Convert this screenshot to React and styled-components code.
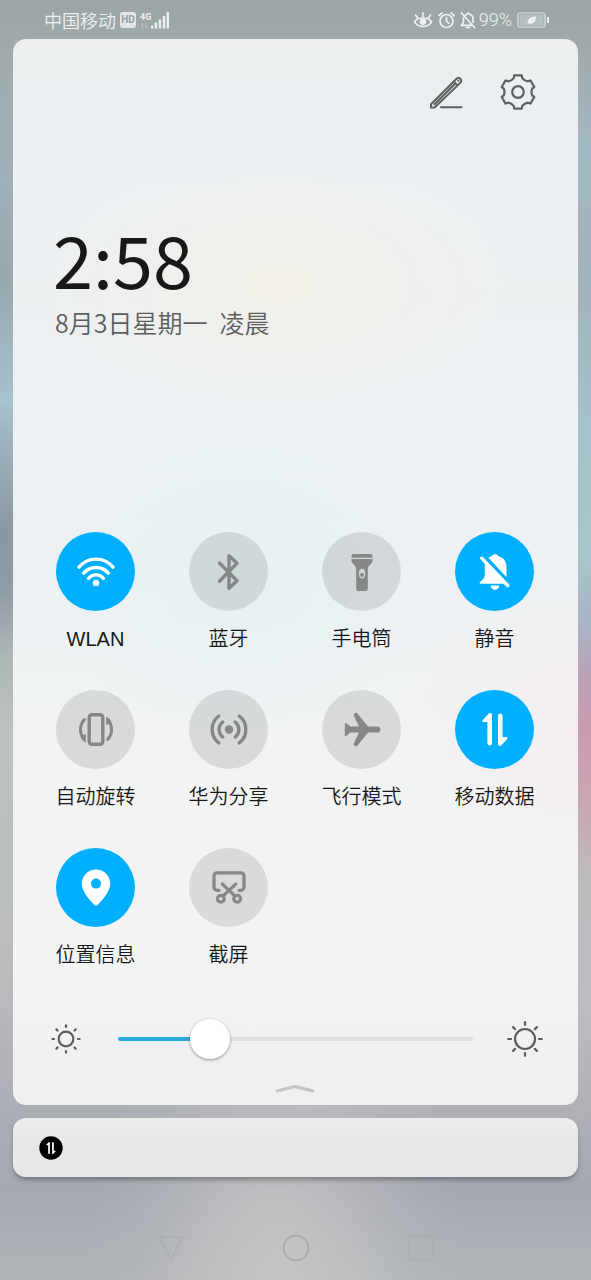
import React, { useState } from "react";
import styled, { createGlobalStyle } from "styled-components";

const GlobalStyle = createGlobalStyle`
  * {
    box-sizing: border-box;
  }
  body {
    margin: 0;
    font-family: "Liberation Sans", "Noto Sans CJK SC", sans-serif;
  }
  button {
    border: 0;
    padding: 0;
    background: none;
    color: inherit;
    font: inherit;
    cursor: pointer;
  }
  svg {
    display: block;
  }
`;

const Screen = styled.div`
  display: flex;
  flex-direction: column;
  min-height: 100vh;
  background:
    radial-gradient(ellipse 190px 340px at 47% 100%, #c4c4c4 0%, rgba(196, 196, 196, 0.6) 40%, rgba(196, 196, 196, 0.15) 75%, rgba(196, 196, 196, 0) 100%),
    linear-gradient(
        #9da5a6 0,
        #a1abad 60px,
        #a0b0b7 180px,
        #98a8ac 280px,
        #a5c2cf 400px,
        #9db0bb 450px,
        #8b97a1 530px,
        #909ba3 590px,
        #b0b8b8 660px,
        #bcc1c0 730px,
        #b9babd 1000px,
        #abaeb5 1110px,
        #a5a9b2 1190px,
        #b1b4b8 1280px
      )
      left / 50% 100% no-repeat,
    linear-gradient(
        #9da5a6 0,
        #a1abad 60px,
        #a3b8c2 150px,
        #a1b2b8 280px,
        #a6bfc9 400px,
        #a9c4c9 560px,
        #a9b5c4 620px,
        #b8a3b6 670px,
        #cb9baf 735px,
        #c8a6b4 800px,
        #bdb9bd 870px,
        #bdbdc1 1000px,
        #b0b1b7 1110px,
        #a5a8b2 1190px,
        #b1b6b9 1280px
      )
      right / 50% 100% no-repeat,
    #a5a9b2;
`;

const StatusBar = styled.header`
  display: flex;
  align-items: center;
  justify-content: space-between;
  height: 39px;
  padding: 0 42px 0 44px;
  color: #edf1f2;
`;

const StatusGroup = styled.div`
  display: flex;
  align-items: center;
  gap: ${(p) => p.$gap}px;
`;

const Carrier = styled.span`
  font-family: "Noto Sans CJK SC", sans-serif;
  font-size: 18px;
  line-height: 24px;
  font-weight: 350;
`;

const HdBadge = styled.span`
  width: 16px;
  border-radius: 3px;
  background: #e3e7e8;
  color: #929b9d;
  font-family: Roboto, sans-serif;
  font-size: 10px;
  line-height: 16px;
  font-weight: bold;
  text-align: center;
`;

const Network = styled.div`
  display: flex;
  align-items: flex-end;
`;

const NetworkType = styled.div`
  display: flex;
  flex-direction: column;
  align-items: flex-start;
  font-family: Roboto, sans-serif;
  font-size: 9px;
  line-height: 10px;
  font-weight: bold;
`;

const Percent = styled.span`
  font-family: Roboto, sans-serif;
  font-size: 18px;
  line-height: 24px;
  font-weight: 300;
`;

const Panel = styled.main`
  margin: 0 13px;
  padding: 35px 17px 11px 16px;
  border-radius: 13px;
  background:
    radial-gradient(ellipse 230px 130px at 47% 23%, #f2f0e8 0%, rgba(242, 240, 232, 0) 100%),
    radial-gradient(ellipse 200px 150px at 40% 51%, #e6f1f3 0%, rgba(230, 241, 243, 0) 100%),
    radial-gradient(ellipse 180px 150px at 100% 65%, #f5edf0 0%, rgba(245, 237, 240, 0) 100%),
    linear-gradient(#ebedee 0%, #ecf0f3 12%, #edf0f1 24%, #ebf1f4 38%, #edf1f3 50%, #f2f3f3 70%, #f2f3f3 88%, #efeff0 100%);
`;

const Toolbar = styled.div`
  display: flex;
  justify-content: flex-end;
  gap: 36px;
  padding-right: 25px;
  color: #5e6061;
`;

const Clock = styled.div`
  margin-top: 112px;
  padding-left: 24px;
  color: #171817;
  font-family: "Noto Sans CJK SC", sans-serif;
  font-size: 72px;
  line-height: 72px;
  font-weight: 400;
`;

const DateLine = styled.div`
  display: flex;
  gap: 12px;
  margin-top: 10px;
  padding-left: 26px;
  color: #5d5e5d;
  font-family: "Noto Sans CJK SC", sans-serif;
  font-size: 25px;
  line-height: 36px;
  font-weight: 350;
`;

const TileGrid = styled.div`
  display: grid;
  grid-template-columns: repeat(4, 1fr);
  row-gap: 37px;
  margin-top: 192px;
`;

const Tile = styled.button`
  display: flex;
  flex-direction: column;
  align-items: center;
  gap: 14px;
`;

const TileCircle = styled.span`
  display: grid;
  place-items: center;
  width: 79px;
  height: 79px;
  border-radius: 50%;
  background: ${(p) => (p.$on ? "#00b0ff" : "rgba(0, 0, 0, 0.1)")};
  color: ${(p) => (p.$on ? "#fff" : "#868888")};
`;

const TileLabel = styled.span`
  color: #161717;
  font-size: 20px;
  line-height: 28px;
  font-weight: 350;
  white-space: nowrap;
`;

const Brightness = styled.div`
  display: flex;
  align-items: center;
  margin-top: 50px;
  padding: 0 18px 0 22px;
  color: #5b5c5c;
`;

const Slider = styled.input`
  appearance: none;
  flex: 1;
  min-width: 0;
  height: 40px;
  margin: 0 34px 0 37px;
  background: none;

  &::-webkit-slider-runnable-track {
    height: 4px;
    border-radius: 2px;
    background: linear-gradient(to right, #27a9de var(--fill), #dedfdf var(--fill));
  }
  &::-webkit-slider-thumb {
    appearance: none;
    width: 40px;
    height: 40px;
    margin-top: -18px;
    border-radius: 50%;
    background: #fff;
    box-shadow: 0 1px 3px rgba(0, 0, 0, 0.4);
  }
`;

const Collapse = styled.button`
  display: block;
  margin: 25px auto 0;
  color: #c3c4c4;
`;

const Notification = styled.section`
  display: flex;
  align-items: center;
  height: 59px;
  margin: 13px 13px 0;
  padding-left: 26px;
  border-radius: 13px;
  background: linear-gradient(#ededee, #e7e8e9 30%, #e6e7e7);
  box-shadow: 0 4px 6px -2px rgba(0, 0, 0, 0.4);
`;

const NavBar = styled.nav`
  display: flex;
  justify-content: center;
  gap: 97px;
  margin-top: 57px;
  padding-bottom: 18px;
`;

const NavButton = styled.button`
  color: ${(p) => (p.$strong ? "#abacad" : "rgba(160, 162, 164, 0.35)")};
`;

const Icon = ({ size = 40, width, height, children, ...rest }) => (
  <svg
    width={width || size}
    height={height || size}
    viewBox={`0 0 ${width || size} ${height || size}`}
    fill="none"
    stroke="currentColor"
    strokeWidth="3.4"
    strokeLinecap="round"
    strokeLinejoin="round"
    aria-hidden="true"
    {...rest}
  >
    {children}
  </svg>
);

const polar = (r, deg) => {
  const a = (deg * Math.PI) / 180;
  return `${(18 + r * Math.cos(a)).toFixed(2)} ${(18 + r * Math.sin(a)).toFixed(2)}`;
};

// six teeth, with a shallow curved valley between each pair
const gearPath =
  [0, 1, 2, 3, 4, 5]
    .map((i) => {
      const t = i * 60 - 90;
      return `${i ? "L" : "M"}${polar(17, t - 13)}L${polar(17, t + 13)}L${polar(14.6, t + 17)}Q${polar(12.8, t + 30)} ${polar(14.6, t + 43)}`;
    })
    .join("") + "Z";

const EditIcon = () => (
  <Icon size={36} strokeWidth="2">
    <path d="M3 33.5v-3.2L28.300 5c1.400-1.400 2.900-1.400 4.100-.2 1.200 1.200 1.200 2.700-.2 4.100L6.600 33.500Z" />
    <path d="M6.500 30.200 26.800 10M25.800 7.600l3.600 3.600" />
    <circle cx="30.300" cy="6.800" r="1" fill="currentColor" stroke="none" />
    <path d="M13 33.200h20.500" />
  </Icon>
);

const GearIcon = () => (
  <Icon size={36} strokeWidth="2.2">
    <path d={gearPath} />
    <circle cx="18" cy="18" r="5.8" />
  </Icon>
);

const WifiIcon = () => (
  <Icon>
    <path d="M3 15.200a22 22 0 0 1 34 0M7.700 21.200a16 16 0 0 1 24.600 0M12.500 26.500a9.500 9.500 0 0 1 15 0" />
    <circle cx="20" cy="31" r="3.200" fill="currentColor" stroke="none" />
  </Icon>
);

const BluetoothIcon = () => (
  <Icon>
    <path d="M10.500 11 28 28.800 20 36.300V3.700l8 7.500L10.500 29.300" />
  </Icon>
);

const TorchIcon = () => (
  <Icon fill="currentColor" stroke="none">
    <path d="M9.500 5.700V4a2 2 0 0 1 2-2h17a2 2 0 0 1 2 2v1.700Z" />
    <path
      fillRule="evenodd"
      d="M9.500 7h21v2.600c0 1-4.700 5-4.700 7.200V37a2 2 0 0 1-2 2h-7.600a2 2 0 0 1-2-2V16.800c0-2.200-4.700-6.200-4.700-7.200ZM20 16.800c-2 0-3.200 2-3.200 4.900s1.200 4.900 3.200 4.900 3.200-2 3.200-4.900-1.200-4.900-3.200-4.900Z"
    />
    <circle cx="20" cy="23" r="2" />
  </Icon>
);

const MuteIcon = () => (
  <Icon>
    <path d="m6.700 6.200 26 27.300" />
    <g fill="currentColor" stroke="none">
      <path d="M9.800 9.500 31 31.800H5.600c-1 0-1.300-1-.6-1.700 3.200-3 4.800-4.200 4.800-7.600Z" />
      <path d="M13.400 5.800c1-.8 2.200-1.400 3.400-1.700.5-2.500 5.900-2.500 6.400 0 5 1.400 8.300 5.300 8.300 10.800v10.300Z" />
      <path d="M15.700 33.500h8.600a4.300 4.300 0 0 1-8.600 0Z" />
    </g>
  </Icon>
);

const RotateIcon = () => (
  <Icon>
    <rect x="13.200" y="4.800" width="13.600" height="29.400" rx="2.600" />
    <path d="M8.400 9.500a14.500 14.500 0 0 0-1.500 18M31.600 29.500a14.500 14.500 0 0 0 1.500-18" strokeWidth="3" />
    <path d="M9.800 24v8.200c-2.600-.6-4.500-3-5.400-6Z M30.200 15V6.800c2.600.6 4.500 3 5.400 6Z" fill="currentColor" stroke="none" />
  </Icon>
);

const ShareIcon = () => (
  <Icon>
    <circle cx="20" cy="19.500" r="4.200" fill="currentColor" stroke="none" />
    <path d="M26.200 12a9.500 9.500 0 0 1 0 15M30.200 6a17 17 0 0 1 0 27M13.800 12a9.500 9.500 0 0 0 0 15M9.800 6a17 17 0 0 0 0 27" />
  </Icon>
);

const PlaneIcon = () => (
  <Icon fill="currentColor" stroke="none">
    <path d="M11.800 5.600c-.7-2.300 2.200-3.800 3.700-2L26 16.400h9.300a3.100 3.100 0 0 1 0 6.200H26L15.500 35.400c-1.500 1.800-4.400.3-3.700-2L17 22.600H8.500L4 26c-.6.300-1.200 0-1.200-.6V13.600c0-.6.600-.9 1.200-.6l4.500 3.400H17Z" />
  </Icon>
);

const dataArrow = "M17 5c0-2-2.400-2.500-3.500-1.200L7.800 9.900c-.8 1-.4 2 .7 2h3.900v21.400a2.300 2.300 0 0 0 4.600 0Z";

const DataIcon = () => (
  <Icon fill="currentColor" stroke="none">
    <path d={dataArrow} />
    <path d={dataArrow} transform="rotate(180 20 19.500)" />
  </Icon>
);

const PinIcon = () => (
  <Icon fill="currentColor" stroke="none">
    <path
      fillRule="evenodd"
      d="M18.600 37C15 33.400 5.800 24 5.800 15.700a14.200 14.200 0 0 1 28.400 0C34.200 24 25 33.400 21.400 37c-.9.900-1.900.9-2.800 0ZM20 10.600a5 5 0 1 0 0 10 5 5 0 0 0 0-10Z"
    />
  </Icon>
);

const ScreenshotIcon = () => (
  <Icon strokeWidth="3.200">
    <path d="M10 22.300H8a3 3 0 0 1-3-3V7.800a3 3 0 0 1 3-3h24a3 3 0 0 1 3 3v11.500a3 3 0 0 1-3 3h-2" />
    <path d="m13.200 16 12.800 12M26.800 16 14 28" />
    <circle cx="11.800" cy="30.800" r="3.400" />
    <circle cx="28.200" cy="30.800" r="3.400" />
  </Icon>
);

const SunIcon = ({ size, radius, from, to }) => {
  const c = size / 2;
  return (
    <Icon size={size} strokeWidth="2.200">
      <circle cx={c} cy={c} r={radius} />
      {[0, 45, 90, 135, 180, 225, 270, 315].map((a) => (
        <path key={a} d={`M${c + from} ${c}H${c + to}`} transform={`rotate(${a} ${c} ${c})`} />
      ))}
    </Icon>
  );
};

const SignalIcon = () => (
  <Icon width={18} height={18} strokeWidth="2.400" strokeLinecap="butt">
    <path d="M1.200 17.500v-3M5 17.500v-6M9 17.500V8.500M13 17.500V5M16.800 17.500V1" />
  </Icon>
);

const EyeIcon = () => (
  <Icon width={20} height={18} strokeWidth="1.700">
    <path d="M1.500 10.800C5 5.700 15 5.700 18.500 10.800 15 17 5 17 1.500 10.800Z" />
    <circle cx="10" cy="10.800" r="3.300" fill="currentColor" stroke="none" />
    <path d="M10 6V1.800M4.800 7.200 2.500 4M15.200 7.200 17.500 4" />
  </Icon>
);

const AlarmIcon = () => (
  <Icon width={17} height={18} strokeWidth="1.700">
    <circle cx="8.500" cy="10" r="6.500" />
    <path d="M8.500 6.500V10l2.300 2.300M1 4.500 4 1.800M16 4.500l-3-2.700" />
  </Icon>
);

const BellOffIcon = () => (
  <Icon width={16} height={18} strokeWidth="1.700">
    <path d="M1.500 2 14.500 16.500M3.500 6.500v5L1.500 14.300H12M5.500 4c.6-.5 1.200-.8 1.800-.9 0-1.300 1.900-1.300 1.900 0 2.400.6 3.800 2.400 3.800 4.700v3.500M6.500 16.500h3" />
  </Icon>
);

const BatteryIcon = () => (
  <Icon width={32} height={16} strokeWidth="1.200">
    <rect x="1" y="1" width="27" height="14" rx="2" strokeOpacity="0.8" />
    <rect x="2.500" y="2.500" width="24" height="11" rx="1" fill="rgba(222,228,228,0.4)" stroke="none" />
    <path d="M11 12c-1.500-4 1.500-7 8-7.500C19 10 15.500 13 12 11.200Z" fill="currentColor" stroke="none" />
    <path d="M31 5v6" strokeWidth="2" strokeLinecap="butt" />
  </Icon>
);

const tiles = [
  { label: "WLAN", icon: WifiIcon, on: true },
  { label: "蓝牙", icon: BluetoothIcon },
  { label: "手电筒", icon: TorchIcon },
  { label: "静音", icon: MuteIcon, on: true },
  { label: "自动旋转", icon: RotateIcon },
  { label: "华为分享", icon: ShareIcon },
  { label: "飞行模式", icon: PlaneIcon },
  { label: "移动数据", icon: DataIcon, on: true },
  { label: "位置信息", icon: PinIcon, on: true },
  { label: "截屏", icon: ScreenshotIcon },
];

const App = () => {
  const [active, setActive] = useState(tiles.map((t) => !!t.on));
  const [level, setLevel] = useState(23);

  const toggle = (index) => setActive(active.map((on, i) => (i === index ? !on : on)));

  return (
    <Screen>
      <GlobalStyle />
      <StatusBar>
        <StatusGroup $gap={4}>
          <Carrier>中国移动</Carrier>
          <HdBadge>HD</HdBadge>
          <Network>
            <NetworkType>
              4G
              <Icon width={10} height={7} strokeWidth="1" opacity="0.4">
                <path d="M2.500 6V1L1 2.500M6 1v5l1.500-1.500" />
              </Icon>
            </NetworkType>
            <SignalIcon />
          </Network>
        </StatusGroup>
        <StatusGroup $gap={5}>
          <EyeIcon />
          <AlarmIcon />
          <StatusGroup $gap={3}>
            <BellOffIcon />
            <Percent>99%</Percent>
          </StatusGroup>
          <BatteryIcon />
        </StatusGroup>
      </StatusBar>

      <Panel>
        <Toolbar>
          <button aria-label="编辑">
            <EditIcon />
          </button>
          <button aria-label="设置">
            <GearIcon />
          </button>
        </Toolbar>
        <Clock>2:58</Clock>
        <DateLine>
          <span>8月3日星期一</span>
          <span>凌晨</span>
        </DateLine>

        <TileGrid>
          {tiles.map(({ label, icon: TileIcon }, i) => (
            <Tile key={label} aria-pressed={active[i]} onClick={() => toggle(i)}>
              <TileCircle $on={active[i]}>
                <TileIcon />
              </TileCircle>
              <TileLabel>{label}</TileLabel>
            </Tile>
          ))}
        </TileGrid>

        <Brightness>
          <SunIcon size={30} radius={7.3} from={12} to={13.6} />
          <Slider
            type="range"
            aria-label="亮度"
            min="0"
            max="100"
            value={level}
            onChange={(e) => setLevel(Number(e.target.value))}
            style={{ "--fill": `calc(20px + (100% - 40px) * ${level / 100})` }}
          />
          <SunIcon size={36} radius={10} from={14} to={16.8} />
        </Brightness>
        <Collapse aria-label="收起">
          <Icon width={40} height={10} strokeWidth="3">
            <path d="M2 7 20 2.500l18 4.500" />
          </Icon>
        </Collapse>
      </Panel>

      <Notification>
        <Icon size={24} stroke="none">
          <circle cx="12" cy="12" r="11.700" fill="#000" />
          <g transform="translate(4.600 4.800) scale(0.370)" fill="#fff">
            <path d={dataArrow} />
            <path d={dataArrow} transform="rotate(180 20 19.500)" />
          </g>
        </Icon>
      </Notification>

      <NavBar>
        <NavButton aria-label="返回">
          <Icon size={28} strokeWidth="1.500">
            <path d="M2.500 3h23L14 25Z" />
          </Icon>
        </NavButton>
        <NavButton aria-label="主屏幕" $strong>
          <Icon size={28} strokeWidth="2">
            <circle cx="14" cy="14" r="12.500" />
          </Icon>
        </NavButton>
        <NavButton aria-label="最近任务">
          <Icon size={28} strokeWidth="1.500">
            <rect x="2.500" y="2.500" width="23" height="23" rx="1" />
          </Icon>
        </NavButton>
      </NavBar>
    </Screen>
  );
};

export default App;
